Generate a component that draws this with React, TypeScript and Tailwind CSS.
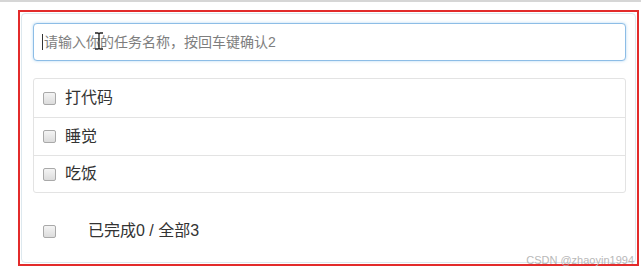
import React from "react";

const todos = ["打代码", "睡觉", "吃饭"];

const Box = () => (
  <span className="inline-block w-[13px] h-[13px] flex-shrink-0 rounded-[2px] border border-[#a9a9a9] bg-gradient-to-b from-[#f4f4f4] to-[#dcdcdc]" />
);

export default function App() {
  return (
    <div
      className="w-[641px] h-[272px] bg-white overflow-hidden relative"
      style={{ fontFamily: '"Liberation Sans", "Noto Sans CJK SC", sans-serif' }}
    >
      <div className="h-[2px] bg-[#d6d6d6]" />

      {/* Red frame */}
      <div className="mt-[8px] ml-[18px] w-[621px] h-[256px] border-2 border-[#e32b2b]">
        <div className="m-px h-[250px] border border-[#dde8ee] rounded-[4px] pl-[11px] pr-[9px] pt-[9px]">
          {/* Input */}
          <div className="relative h-[38px] rounded-[4px] border border-[#8dbde6] shadow-[0_0_3px_rgba(102,175,233,0.5)] bg-white flex items-center pl-[8px]">
            <span className="w-px h-[16px] bg-[#333] mr-px" />
            <span className="text-[14px] text-[#7e7e7e]">请输入你的任务名称，按回车键确认2</span>
            {/* mouse I-beam */}
            <svg className="absolute left-[60px] top-[8px]" width="10" height="18" viewBox="0 0 10 18">
              <path d="M1 1h3l1 1 1-1h3M5 2v14M1 17h3l1-1 1 1h3" fill="none" stroke="#222" strokeWidth="1.3" />
            </svg>
          </div>

          {/* List */}
          <ul className="mt-[17px] border border-[#e3e3e3] rounded-[3px]">
            {todos.map((t, i) => (
              <li
                key={t}
                className={
                  "flex items-center gap-[9px] pl-[9px] text-[16px] text-[#333] " +
                  (i === 0 ? "h-[38px]" : i === 1 ? "h-[38px] border-t border-[#e3e3e3]" : "h-[37px] border-t border-[#e3e3e3]")
                }
              >
                <Box />
                <span>{t}</span>
              </li>
            ))}
          </ul>

          {/* Footer */}
          <div className="mt-[19px] h-[38px] flex items-center pl-[10px]">
            <Box />
            <span className="ml-[32px] text-[16px] text-[#333]">已完成0 / 全部3</span>
          </div>
        </div>
      </div>

      <span className="absolute right-[7px] bottom-[6px] text-[11px] leading-none text-[#b8b8b8]">
        CSDN @zhaoyin1994
      </span>
    </div>
  );
}
